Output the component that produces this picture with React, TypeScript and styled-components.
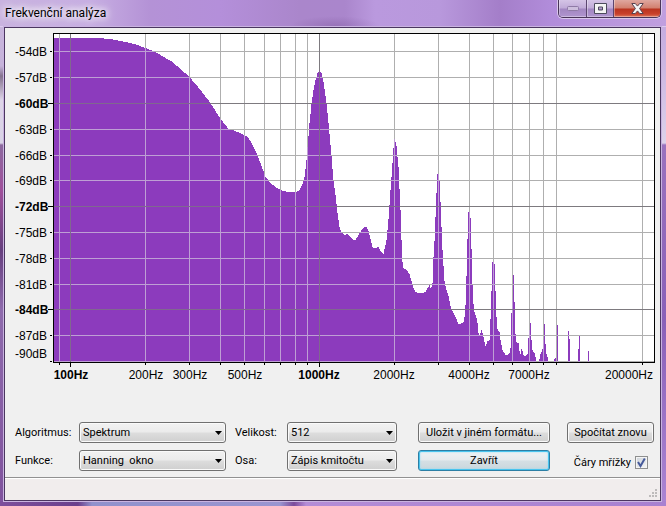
import React, { useState } from 'react';
import styled, { createGlobalStyle, css } from 'styled-components';

const GlobalStyle = createGlobalStyle`
  * { box-sizing: border-box; }
  html, body, #root { height: 100%; }
  body {
    margin: 0;
    background: #8f62b5;
    color: #000;
    font: 11px/13px Roboto, "DejaVu Sans Condensed", sans-serif;
  }
  button, select, input { font: inherit; color: inherit; }
`;

const Frame = styled.div`
  display: flex;
  flex-direction: column;
  min-height: 100vh;
  padding: 0 5px 5px 4px;
  background:
    linear-gradient(to right, #7d4f9c 0, #6a3f8c 78px, #9191cc 92px, #9a95d0 280px, #7c4a9a 294px, #b48cd6 306px, #a880d0 100%) bottom / 100% 5px no-repeat,
    linear-gradient(#c2a4df 0, #cbb5e2 60px, #ddd2ea 143px, #9a72be 145px, #8a60b8 320px, #ab85d3 100%) right / 5px 100% no-repeat,
    linear-gradient(#c9b6dd 0, #c6b3da 66px, #85738f 76px, #ded5e8 100px, #d9d3e6 143px, #8d6aa0 145px, #a0509c 190px, #67407f 250px, #8f6bad 310px, #80529d 100%) left / 4px 100% no-repeat,
    #b48fd8;
`;

const TitleBar = styled.header`
  display: flex;
  align-items: flex-start;
  justify-content: space-between;
  height: 27px;
  margin: 0 -5px 0 -4px;
  padding: 0 5px;
  border-bottom: 1px solid #dccbee;
  background:
    radial-gradient(closest-side, rgba(110, 70, 140, .3), transparent) 290px 16px / 90px 20px no-repeat,
    linear-gradient(to right, #c9b3df 0, #c7aee2 90px, #b492d6 150px, #b48fda 220px, #aa86cb 300px, #aa86cc 345px, #ba99de 375px, #b898dc 440px, #a47ec9 500px, #b18cda 550px, #c09fdf 100%);
`;

const Title = styled.h1`
  margin: 0;
  padding-top: 5px;
  font: 12px/16px Roboto, "Open Sans", sans-serif;
  text-shadow: 0 0 6px #fff, 0 0 8px #fff, 0 0 12px #fff;
`;

const WindowButtons = styled.div`
  display: flex;
  height: 18px;
  overflow: hidden;
  border: 1px solid #493559;
  border-top: 0;
  border-radius: 0 0 5px 5px;
  box-shadow: 0 0 0 1px #d9c7ec;
`;

const WindowButton = styled.button<{ $width: number; $close?: boolean }>`
  display: flex;
  align-items: center;
  justify-content: center;
  width: ${p => p.$width}px;
  padding: 0;
  border: 0;
  border-right: ${p => (p.$close ? '0' : '1px solid #5c4670')};
  box-shadow: inset 1px -1px 0 rgba(255, 255, 255, .35);
  background: ${p =>
    p.$close
      ? 'linear-gradient(#dfa79f 0, #d2806f 8px, #b93420 9px, #c9412b 14px, #dd7a61 100%)'
      : 'linear-gradient(#d5c4e6 0, #c1abd8 8px, #a286c1 9px, #b095cf 100%)'};
`;

const Client = styled.main`
  display: flex;
  flex: 1;
  flex-direction: column;
  border: 1px solid #4b3660;
  background: #f0f0f0;
  box-shadow: 0 0 0 1px #c9b3e0;
`;

const Chart = styled.svg`
  display: block;
  width: 100%;
  height: auto;
  font: 12px "Liberation Sans", Arial, sans-serif;
`;

const Controls = styled.form`
  display: grid;
  grid-template-columns: 64px 147fr 61px 110fr 153fr 104fr;
  grid-auto-rows: 21px;
  row-gap: 7px;
  align-items: center;
  padding: 34px 6px 6px 10px;
`;

const FieldLabel = styled.label<{ $inset?: boolean }>`
  padding-left: ${p => (p.$inset ? 9 : 0)}px;
`;

const SelectBox = styled.div`
  position: relative;
  height: 21px;

  svg {
    position: absolute;
    top: 9px;
    right: 4px;
    pointer-events: none;
  }
`;

const raised = css`
  height: 21px;
  border: 1px solid #707070;
  border-radius: 3px;
  background: linear-gradient(#f2f2f2 0, #ebebeb 9px, #dddddd 10px, #cfcfcf 100%);
  box-shadow: inset 0 0 0 1px #fafafa;
`;

const Select = styled.select`
  ${raised}
  display: block;
  width: 100%;
  padding: 0 16px 0 3px;
  appearance: none;
`;

const Button = styled.button<{ $gap: number; $primary?: boolean }>`
  ${raised}
  margin-left: ${p => p.$gap}px;
  padding: 0;
  white-space: nowrap;
  ${p =>
    p.$primary &&
    css`
      border-color: #2c7fa5;
      background: linear-gradient(#eef2f4 0, #e4eaed 9px, #d5dfe4 10px, #c9d6dc 100%);
      box-shadow: inset 0 0 0 1px #48c4ee, inset 0 0 2px 1px #8edcf5;
    `}
`;

const CheckLabel = styled.label`
  display: flex;
  align-items: center;
  justify-content: flex-end;
  gap: 4px;
  padding: 4px 6px 0 0;
  white-space: nowrap;
`;

const CheckBox = styled.input`
  width: 13px;
  height: 13px;
  margin: 0;
  appearance: none;
  border: 1px solid #8e8f8f;
  background: linear-gradient(135deg, #cdd3da, #f6f6f6);
  box-shadow: inset 0 0 0 1px #f4f4f4;
`;

const CheckHolder = styled.span`
  display: grid;

  > * { grid-area: 1 / 1; }
  svg { pointer-events: none; z-index: 1; }
`;

const StatusBar = styled.footer`
  display: flex;
  align-items: flex-end;
  justify-content: flex-end;
  height: 23px;
  margin-top: auto;
  padding: 0 2px 2px 0;
  border-top: 1px solid #919191;
  background: #f1eded;
  box-shadow: inset 0 1px 0 #fff;
`;

const PLOT = { left: 53, right: 654, top: 33, bottom: 362 };

const freqX = (hz: number) => Math.floor(319.35 + 248.7 * Math.log10(hz / 1000));
const frequencies = [90, 100, 200, 300, 400, 500, 600, 700, 800, 900, 1000, 2000, 3000, 4000, 5000, 6000, 7000, 8000, 9000, 20000];
const verticals = frequencies.map(hz => ({ x: freqX(hz), major: hz === 100 || hz === 1000 }));

const levels = [54, 57, 60, 63, 66, 69, 72, 75, 78, 81, 84, 87, 90];
const horizontals = levels.map((db, i) => ({
  db,
  y: Math.floor(51.73 + i * 25.82),
  major: db % 12 === 0,
}));

const frequencyLabels = [
  { x: 71, text: '100Hz', bold: true },
  { x: 146, text: '200Hz' },
  { x: 190, text: '300Hz' },
  { x: 245, text: '500Hz' },
  { x: 319, text: '1000Hz', bold: true },
  { x: 394, text: '2000Hz' },
  { x: 469, text: '4000Hz' },
  { x: 529, text: '7000Hz' },
  { x: 629, text: '20000Hz' },
];

const spectrum: [number, number][] = [
  [54, 38], [98, 38], [110, 39], [120, 41], [130, 43], [137, 45], [145, 48], [155, 52], [165, 58], [172, 62],
  [180, 69], [189, 77], [200, 90], [210, 103], [215, 111], [221, 120], [228, 129], [232, 130], [240, 133],
  [244, 135], [247, 137], [250, 141], [256, 153], [260, 163], [265, 177], [270, 183], [275, 187], [280, 190],
  [287, 192], [296, 192], [299, 190], [302, 184], [304, 177], [306, 160], [307, 147], [308, 136], [309, 123],
  [311, 104], [313, 90], [315, 80], [317, 73], [319, 70], [321, 73], [323, 82], [325, 96], [326, 103],
  [328, 123], [329, 134], [331, 156], [333, 181], [335, 195], [337, 213], [339, 227], [341, 232], [344, 235],
  [347, 234], [350, 237], [353, 240], [355, 240], [358, 235], [361, 230], [364, 227], [366, 227], [368, 231],
  [370, 239], [372, 247], [374, 248], [378, 247], [380, 251], [383, 254], [384, 249], [386, 240], [388, 219],
  [390, 190], [392, 163], [393, 148], [394, 139], [395, 142], [396, 146], [398, 167], [399, 189], [400, 210],
  [401, 240], [402, 262], [403, 268], [406, 270], [409, 274], [411, 281], [413, 288], [415, 292], [418, 293],
  [422, 293], [425, 292], [427, 288], [429, 285], [430, 288], [431, 287], [432, 283], [433, 257], [434, 241],
  [435, 217], [436, 193], [437, 174], [438, 174], [439, 181], [440, 202], [441, 227], [442, 250], [443, 266],
  [444, 281], [446, 290], [448, 296], [450, 306], [452, 311], [455, 317], [458, 324], [460, 324], [463, 322],
  [464, 317], [465, 305], [466, 276], [467, 239], [468, 212], [469, 212], [470, 218], [471, 249], [472, 285],
  [473, 304], [474, 312], [476, 318], [477, 323], [478, 333], [479, 335], [481, 330], [482, 333], [483, 337],
  [485, 346], [487, 341], [489, 340], [490, 319], [491, 291], [492, 262], [493, 262], [494, 264], [495, 291],
  [496, 317], [497, 329], [499, 332], [500, 340], [501, 345], [502, 350], [505, 355], [507, 355], [509, 353],
  [510, 348], [511, 313], [512, 300], [513, 275], [514, 302], [515, 334], [516, 342], [518, 343], [519, 351],
  [520, 354], [521, 349], [522, 351], [523, 355], [525, 356], [527, 354], [528, 338], [529, 330], [530, 323],
  [531, 340], [532, 350], [534, 353], [535, 357], [536, 362], [538, 362], [539, 359], [540, 354], [542, 349],
  [543, 340], [544, 324], [545, 344], [546, 354], [547, 357], [548, 362], [553, 362], [554, 359], [555, 358],
  [556, 362], [557, 325], [558, 362], [567, 362], [568, 331], [569, 339], [570, 362], [577, 362], [578, 349],
  [579, 336], [580, 362], [587, 362], [588, 351], [589, 362],
];

const spectrumPath = (() => {
  let d = `M54 ${PLOT.bottom}`;
  for (let i = 0; i < spectrum.length - 1; i++) {
    const [x0, y0] = spectrum[i];
    const [x1, y1] = spectrum[i + 1];
    for (let x = x0; x < x1; x++) {
      d += `V${Math.round(y0 + ((y1 - y0) * (x - x0)) / (x1 - x0))}h1`;
    }
  }
  return `${d}V${PLOT.bottom}Z`;
})();

function Grid({ minor, major }: { minor: string; major: string }) {
  const line = (isMajor: boolean) => (
    <g fill={isMajor ? major : minor}>
      {verticals.filter(v => v.major === isMajor).map(v => (
        <rect key={`v${v.x}`} x={v.x} y={34} width={1} height={328} />
      ))}
      {horizontals.filter(h => h.major === isMajor).map(h => (
        <rect key={`h${h.db}`} x={54} y={h.y} width={600} height={1} />
      ))}
    </g>
  );
  return <>{line(false)}{line(true)}</>;
}

function SpectrumChart({ grid }: { grid: boolean }) {
  return (
    <Chart viewBox="5 28 655 360" role="img" aria-label="Spektrum">
      <clipPath id="spectrum"><path d={spectrumPath} /></clipPath>
      <g shapeRendering="crispEdges">
        <rect x={53} y={33} width={602} height={330} fill="#000" />
        <rect x={54} y={34} width={600} height={328} fill="#fff" />
        <path d={spectrumPath} fill="#8c3bbd" />
        {grid && (
          <>
            <Grid minor="#afafaf" major="#7d7a7f" />
            <g clipPath="url(#spectrum)"><Grid minor="#be9fd4" major="#80688f" /></g>
          </>
        )}
        {horizontals.map(h => (
          <rect key={h.db} x={h.major ? 48 : 50} y={h.y} width={h.major ? 5 : 2} height={1} />
        ))}
        {verticals.map(v => (
          <rect key={v.x} x={v.x} y={363} width={1} height={v.major ? 4 : 2} />
        ))}
      </g>
      {horizontals.map(h => (
        <text key={h.db} x={15} y={h.db === 90 ? 358 : h.y + 5} fontWeight={h.major ? 700 : 400}>
          {`-${h.db}dB`}
        </text>
      ))}
      {frequencyLabels.map(l => (
        <text key={l.text} x={l.x} y={379} textAnchor="middle" fontWeight={l.bold ? 700 : 400}>{l.text}</text>
      ))}
    </Chart>
  );
}

function DropDown({ id, value }: { id: string; value: string }) {
  return (
    <SelectBox>
      <Select id={id} defaultValue={value}><option>{value}</option></Select>
      <svg width="7" height="4" viewBox="0 0 7 4" aria-hidden="true"><path d="M0 0h7L3.5 4z" /></svg>
    </SelectBox>
  );
}

export default function App() {
  const [grid, setGrid] = useState(true);
  return (
    <Frame>
      <GlobalStyle />
      <TitleBar>
        <Title>Frekvenční analýza</Title>
        <WindowButtons>
          <WindowButton $width={28} type="button" aria-label="Minimalizovat">
            <svg width="12" height="5" viewBox="0 0 12 5"><rect x=".5" y=".5" width="11" height="4" rx="1" fill="#cdbedd" stroke="#8f7aa6" /></svg>
          </WindowButton>
          <WindowButton $width={27} type="button" aria-label="Maximalizovat">
            <svg width="13" height="11" viewBox="0 0 13 11">
              <path fillRule="evenodd" d="M.5.5h12v10H.5zM4.5 4v3h4V4z" fill="#f4f4f4" stroke="#4c4b5c" />
            </svg>
          </WindowButton>
          <WindowButton $width={46} $close type="button" aria-label="Zavřít okno">
            <svg width="13" height="11" viewBox="0 0 13 11">
              <path d="M.8.5h3.5l2.2 2.6L8.700.5h3.500L8.600 5.500l3.600 5H8.700L6.500 7.900 4.300 10.500H.8l3.600-5z" fill="#f5f5f5" stroke="#574350" />
            </svg>
          </WindowButton>
        </WindowButtons>
      </TitleBar>
      <Client>
        <SpectrumChart grid={grid} />
        <Controls onSubmit={e => e.preventDefault()}>
          <FieldLabel htmlFor="algorithm">Algoritmus:</FieldLabel>
          <DropDown id="algorithm" value="Spektrum" />
          <FieldLabel htmlFor="size" $inset>Velikost:</FieldLabel>
          <DropDown id="size" value="512" />
          <Button $gap={21} type="button">Uložit v jiném formátu...</Button>
          <Button $gap={17} type="button">Spočítat znovu</Button>
          <FieldLabel htmlFor="window">Funkce:</FieldLabel>
          <DropDown id="window" value={'Hanning\u00a0 okno'} />
          <FieldLabel htmlFor="axis" $inset>Osa:</FieldLabel>
          <DropDown id="axis" value="Zápis kmitočtu" />
          <Button $gap={21} $primary type="button">Zavřít</Button>
          <CheckLabel>
            Čáry mřížky
            <CheckHolder>
              <CheckBox type="checkbox" checked={grid} onChange={e => setGrid(e.target.checked)} />
              {grid && (
                <svg width="13" height="13" viewBox="0 0 13 13" aria-hidden="true">
                  <path d="M3 6l2.500 4L9.800 2.500" fill="none" stroke="#465a9a" strokeWidth="2" />
                </svg>
              )}
            </CheckHolder>
          </CheckLabel>
        </Controls>
        <StatusBar>
          <svg width="9" height="9" viewBox="0 0 9 9" aria-hidden="true">
            <path d="M6 0h2v2H6zM3 3h2v2H3zM6 3h2v2H6zM0 6h2v2H0zM3 6h2v2H3zM6 6h2v2H6z" fill="#bdbbbb" />
          </svg>
        </StatusBar>
      </Client>
    </Frame>
  );
}
